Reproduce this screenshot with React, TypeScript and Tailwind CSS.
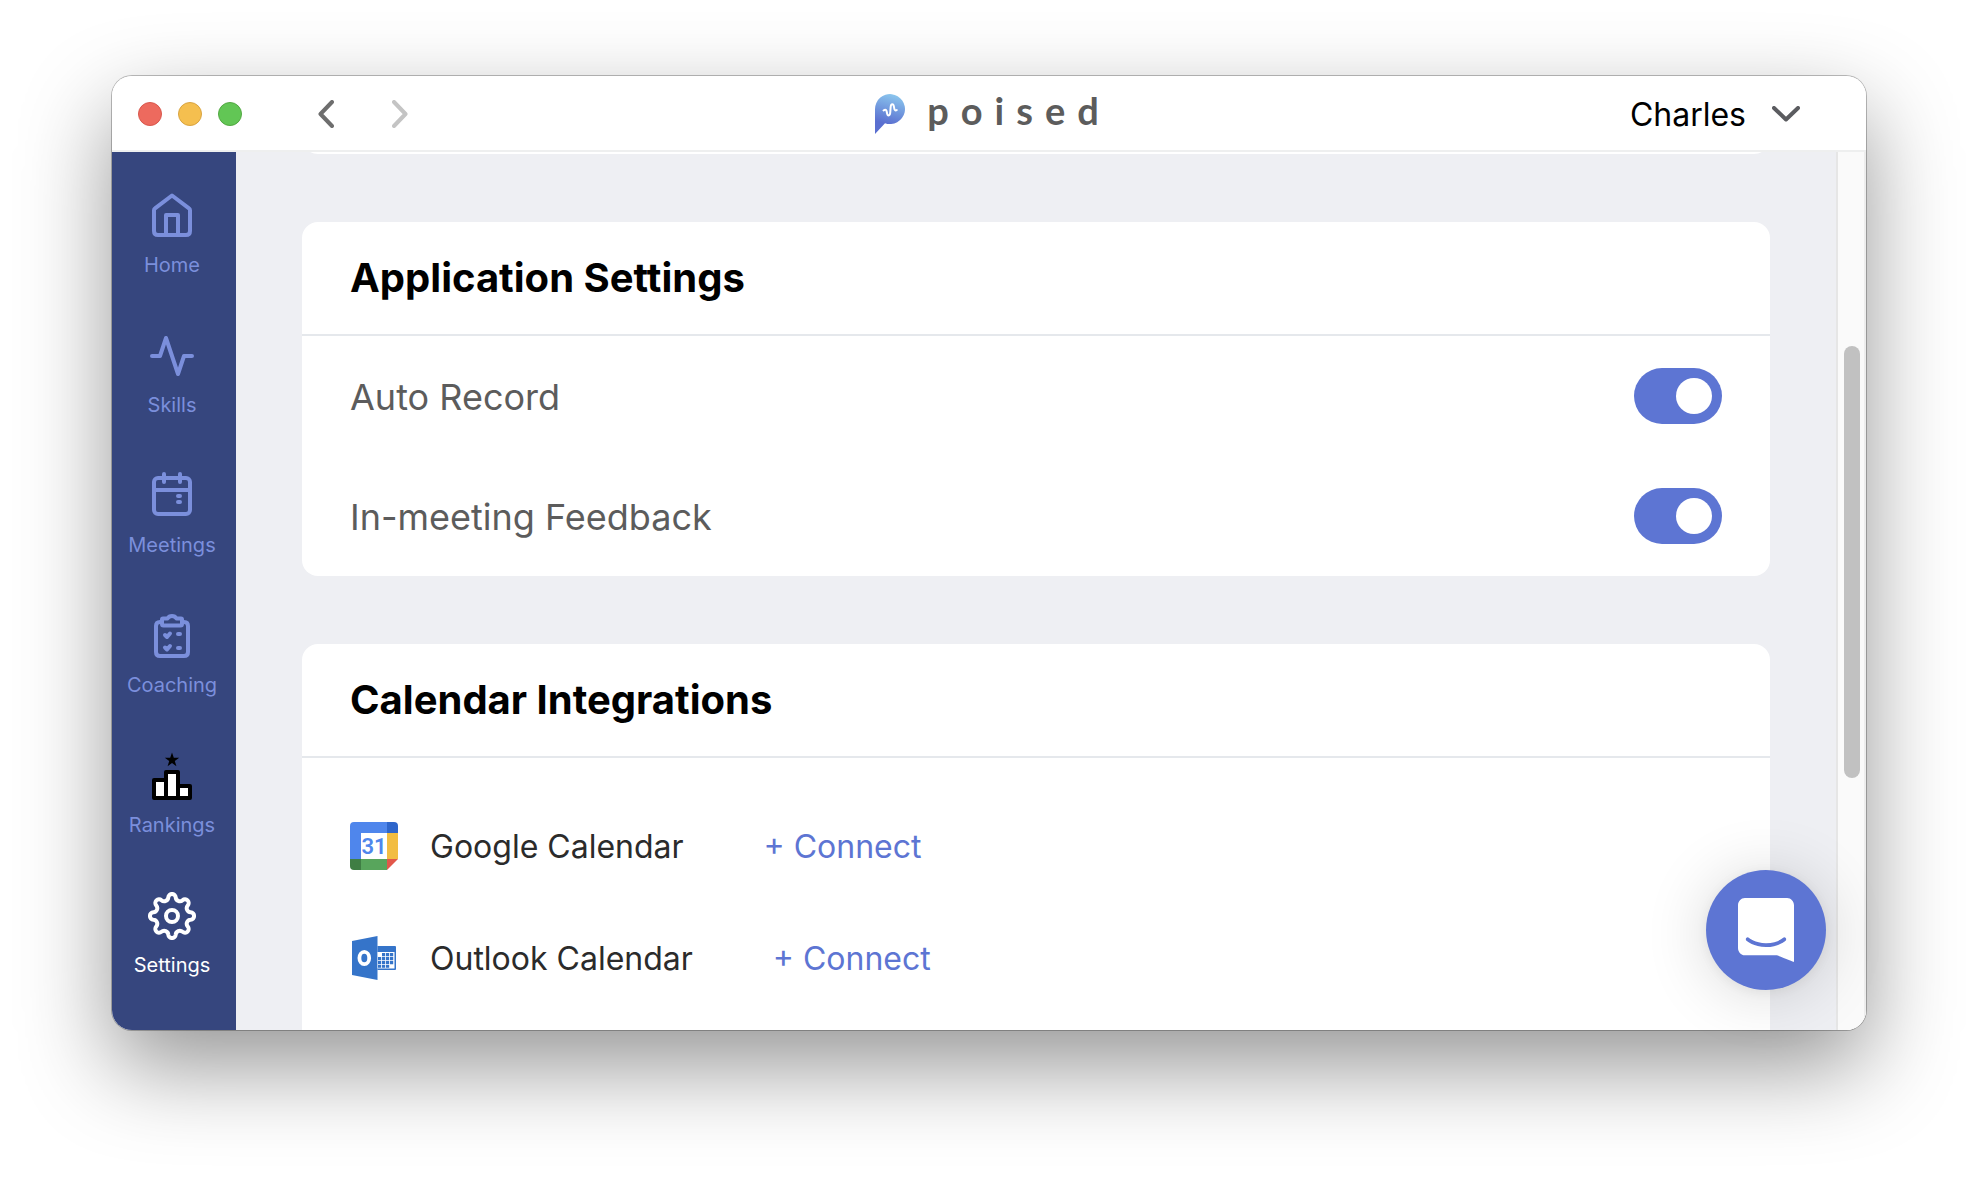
import { useState } from "react";
import type { ReactNode } from "react";

type NavItem = { label: string; icon: ReactNode };

const navItems: NavItem[] = [
  { label: "Home", icon: <HomeIcon /> },
  { label: "Skills", icon: <SkillsIcon /> },
  { label: "Meetings", icon: <MeetingsIcon /> },
  { label: "Coaching", icon: <CoachingIcon /> },
  { label: "Rankings", icon: <RankingsIcon /> },
  { label: "Settings", icon: <SettingsIcon /> },
];

const calendars = [
  { name: "Google Calendar", icon: <GoogleCalendarIcon /> },
  { name: "Outlook Calendar", icon: <OutlookIcon /> },
];

export default function App() {
  const [active, setActive] = useState("Settings");
  const [autoRecord, setAutoRecord] = useState(true);
  const [feedback, setFeedback] = useState(true);

  return (
    <div className="h-screen flex flex-col bg-white px-28 pt-19 pb-37 font-['Inter',sans-serif]">
      <div className="relative flex-1 min-h-0 flex flex-col rounded-[20px] shadow-[0_0_0_1px_rgba(0,0,0,0.25),0_36px_90px_rgba(0,0,0,0.42)]">
        <div className="flex-1 min-h-0 flex flex-col overflow-hidden rounded-[20px] bg-white">
          <TitleBar />
          <div className="flex-1 min-h-0 flex">
            <nav className="w-31 shrink-0 bg-[#36467e] pt-10 pr-1 flex flex-col gap-[54px]">
              {navItems.map((item) => (
                <button
                  key={item.label}
                  onClick={() => setActive(item.label)}
                  className={`flex flex-col items-center gap-3 text-xl leading-[26px] ${
                    item.label === active ? "text-white" : "text-[#7b8fdc]"
                  }`}
                >
                  {item.icon}
                  {item.label}
                </button>
              ))}
            </nav>

            <main className="flex-1 min-w-0 overflow-hidden bg-[#eeeff3] px-[66px] flex flex-col gap-17">
              {/* Tail of the section scrolled out above */}
              <div className="-mt-[30px] h-8 shrink-0 rounded-2xl bg-white" />

              <Card title="Application Settings">
                <ToggleRow label="Auto Record" checked={autoRecord} onChange={setAutoRecord} />
                <ToggleRow label="In-meeting Feedback" checked={feedback} onChange={setFeedback} />
              </Card>

              <Card title="Calendar Integrations">
                <ul className="pt-8 pb-28">
                  {calendars.map((c) => (
                    <li key={c.name} className="h-28 px-12 flex items-center text-[32px] leading-10">
                      {c.icon}
                      <span className="ml-8 pt-0.5 text-[#2b2b2b]">{c.name}</span>
                      <button className="ml-20 pt-0.5 text-[#5d75d3]">+ Connect</button>
                    </li>
                  ))}
                </ul>
              </Card>
            </main>

            {/* Scrollbar */}
            <div className="w-[30px] shrink-0 border-l-2 border-r-2 border-l-[#e6e6e6] border-r-[#ededed] bg-[#fafafa] pl-1.5 pt-[194px]">
              <div className="w-4 h-[432px] rounded-full bg-[#c1c1c1]" />
            </div>
          </div>

          <button
            aria-label="Open chat"
            className="absolute right-10 bottom-10 size-30 rounded-full bg-[#5d75d3] flex items-center justify-center shadow-[0_2px_12px_rgba(0,0,0,0.06),0_4px_64px_rgba(0,0,0,0.16)]"
          >
            <ChatIcon />
          </button>
        </div>
      </div>
    </div>
  );
}

function TitleBar() {
  return (
    <header className="h-19 shrink-0 pt-0.5 border-b-2 border-[#eeefef] grid grid-cols-[1fr_auto_1fr] items-center">
      <div className="flex items-center pl-6.5">
        <div className="flex gap-4">
          <button aria-label="Close" className="size-6 rounded-full border border-[#d9574d] bg-[#ed6a5e]" />
          <button aria-label="Minimize" className="size-6 rounded-full border border-[#d9a441] bg-[#f5bf4f]" />
          <button aria-label="Zoom" className="size-6 rounded-full border border-[#52a842] bg-[#62c655]" />
        </div>
        <button aria-label="Back" className="ml-19 text-[#6e6e6e]">
          <svg className="w-4 h-7" viewBox="0 0 16 28" fill="none" stroke="currentColor" strokeWidth={4} strokeLinecap="round" strokeLinejoin="round">
            <path d="M14 2L2.5 14L14 26" />
          </svg>
        </button>
        <button aria-label="Forward" className="ml-14.5 text-[#c4c4c4]">
          <svg className="w-4 h-7" viewBox="0 0 16 28" fill="none" stroke="currentColor" strokeWidth={4} strokeLinecap="round" strokeLinejoin="round">
            <path d="M2 2L13.5 14L2 26" />
          </svg>
        </button>
      </div>

      <div className="flex items-center">
        <LogoMark />
        <span className="ml-5 -mr-2 pb-2 font-['Lato',sans-serif] font-bold text-[38px] leading-10 tracking-[12px] text-[#5c5c5c]">
          poised
        </span>
      </div>

      <button className="justify-self-end pr-[66px] flex items-center gap-6.5 text-[32px] leading-10 text-black">
        <span className="pt-0.5">Charles</span>
        <svg className="w-7 h-4" viewBox="0 0 28 16" fill="none" stroke="#5b5c60" strokeWidth={4} strokeLinecap="round" strokeLinejoin="round">
          <path d="M2 2L14 13.5L26 2" />
        </svg>
      </button>
    </header>
  );
}

function Card({ title, children }: { title: string; children: ReactNode }) {
  return (
    <section className="shrink-0 rounded-2xl bg-white">
      <h2 className="h-[114px] px-12 flex items-center border-b-2 border-[#e5e8ec] text-[40px] leading-12 font-bold text-black">
        {title}
      </h2>
      {children}
    </section>
  );
}

type ToggleRowProps = { label: string; checked: boolean; onChange: (v: boolean) => void };

function ToggleRow({ label, checked, onChange }: ToggleRowProps) {
  return (
    <label className="h-30 px-12 flex items-center justify-between text-4xl text-[#5c5c5c]">
      <span className="pt-0.5">{label}</span>
      <input
        type="checkbox"
        checked={checked}
        onChange={(e) => onChange(e.target.checked)}
        className="appearance-none w-22 h-14 rounded-full p-2.5 flex justify-start checked:justify-end bg-gray-300 checked:bg-[#5d75d3] before:content-[''] before:size-9 before:rounded-full before:bg-white"
      />
    </label>
  );
}

function LogoMark() {
  return (
    <svg className="w-8 h-10" viewBox="0 0 32 40" fill="none">
      <defs>
        <linearGradient id="logo" x1="20" y1="0" x2="12" y2="30" gradientUnits="userSpaceOnUse">
          <stop stopColor="#8cc8ee" />
          <stop offset="1" stopColor="#5a6fd0" />
        </linearGradient>
      </defs>
      <path d="M0 40V15A15 15 0 1 1 10 29.2Z" fill="url(#logo)" />
      <path d="M8.5 16.5c2-1.5 3-.5 3.3 1.5.6 4.5 3.2 4.5 3.5 0l.3-4.500c.3-4.500 3-4.500 3.500 0 .2 2.500 1.200 3.500 2.700 2.500" stroke="#fff" strokeWidth={2} strokeLinecap="round" />
    </svg>
  );
}

function HomeIcon() {
  return (
    <svg className="size-12" viewBox="0 0 48 48" fill="none" stroke="currentColor" strokeWidth={4} strokeLinejoin="round">
      <path d="M24 3.5L7 16.3Q6 17 6 18.3V39Q6 43 10 43H38Q42 43 42 39V18.3Q42 17 41 16.3Z" />
      <path d="M18 43V23H30V43" />
    </svg>
  );
}

function SkillsIcon() {
  return (
    <svg className="size-12" viewBox="0 0 48 48" fill="none" stroke="currentColor" strokeWidth={4} strokeLinecap="round" strokeLinejoin="round">
      <path d="M4 24H12L18 6L30 42L36 24H44" />
    </svg>
  );
}

function MeetingsIcon() {
  return (
    <svg className="size-12" viewBox="0 0 48 48" fill="none" stroke="currentColor" strokeWidth={4} strokeLinecap="round" strokeLinejoin="round">
      <rect x="6" y="6" width="36" height="36" rx="4" />
      <path d="M6 18H42M16 2V10M32 2V10M30 24h2M30 30h2" />
    </svg>
  );
}

function CoachingIcon() {
  return (
    <svg className="size-12" viewBox="0 0 48 48" fill="none" stroke="currentColor" strokeWidth={4} strokeLinecap="round" strokeLinejoin="round">
      <path d="M13 10H12Q8 10 8 14V40Q8 44 12 44H36Q40 44 40 40V14Q40 10 36 10H35" />
      <path d="M14 7.5Q14 6.5 15 6.5H19.5Q21 4 24 4T28.5 6.5H33Q34 6.5 34 7.5V12Q34 13.5 32.5 13.5H15.5Q14 13.5 14 12Z" />
      <path d="M17 23L19 25L22 21.5M17 35.500L19 37.500L22 34M30 22H32M30 36H32" />
    </svg>
  );
}

function RankingsIcon() {
  return (
    <svg className="size-12" viewBox="0 0 48 48" fill="#fff" stroke="#000" strokeWidth={4} strokeLinejoin="round">
      <path d="M6 28H18V46H6ZM30 34H42V46H30ZM18 20H30V46H18Z" />
      <path d="M24 0.5L25.8 5.7H31.2L26.8 9L28.4 14.3L24 11.1L19.6 14.3L21.2 9L16.8 5.7H22.2Z" fill="#000" stroke="none" />
    </svg>
  );
}

// Eight round teeth: outward and inward arcs meeting on a circle of radius 19
const gearPath = (() => {
  const points = Array.from({ length: 16 }, (_, i) => {
    const a = ((i * 22.5 - 11.25) * Math.PI) / 180;
    return `${(24 + 19 * Math.cos(a)).toFixed(2)} ${(24 + 19 * Math.sin(a)).toFixed(2)}`;
  });
  const arcs = points.map((_, i) => {
    const next = points[(i + 1) % 16];
    return i % 2 === 0 ? `A3.72 3.72 0 0 1 ${next}` : `A4.1 4.1 0 0 0 ${next}`;
  });
  return `M${points[0]}${arcs.join("")}Z`;
})();

function SettingsIcon() {
  return (
    <svg className="size-12" viewBox="0 0 48 48" fill="none" stroke="currentColor" strokeWidth={4} strokeLinejoin="round">
      <SettingsGear />
      <circle cx="24" cy="24" r="6" />
    </svg>
  );
}

function SettingsGear() {
  return <path d={gearPath} />;
}

function GoogleCalendarIcon() {
  return (
    <svg className="size-12" viewBox="0 0 48 48">
      <path d="M37 0H4Q0 0 0 4V37H11V11H37Z" fill="#4f86ec" />
      <path d="M37 0H44Q48 0 48 4V11H37Z" fill="#2f66cb" />
      <path d="M37 11H48V37H37Z" fill="#f2bd42" />
      <path d="M11 37H37V48H11Z" fill="#58a55c" />
      <path d="M0 37H11V48H4Q0 48 0 44Z" fill="#3f7e44" />
      <path d="M37 37H48L37 48Z" fill="#e2574a" />
      <path d="M11 11H37V37H11Z" fill="#fff" />
      <text x="24" y="32" textAnchor="middle" fontSize="22" fontWeight="600" fontFamily="Roboto, sans-serif" fill="#4f86ec">31</text>
    </svg>
  );
}

function OutlookIcon() {
  return (
    <svg className="size-12" viewBox="0 0 48 48">
      <path d="M2 7L27.5 2V46L2 41Z" fill="#3574c9" />
      <ellipse cx="14.3" cy="24" rx="4.9" ry="6.2" fill="none" stroke="#fff" strokeWidth={3.8} />
      <path d="M27.5 12H45Q46 12 46 13V35Q46 36 45 36H27.5Z" fill="#3574c9" />
      <path d="M27.5 18H44.5V34.5H27.5Z" fill="#fff" />
      <path d="M32 19h3.2v3.200h-3.200zM36 19h3.200v3.200h-3.200zM40 19h3.200v3.200h-3.200zM28 23h3.200v3.200h-3.200zM32 23h3.200v3.200h-3.200zM36 23h3.200v3.200h-3.200zM40 23h3.200v3.200h-3.200zM28 27h3.200v3.200h-3.200zM32 27h3.200v3.200h-3.200zM36 27h3.200v3.200h-3.200zM40 27h3.200v3.200h-3.200zM28 31h3.200v2.800h-3.200zM32 31h3.200v2.800h-3.200zM36 31h3.200v2.800h-3.200z" fill="#3574c9" />
    </svg>
  );
}

function ChatIcon() {
  return (
    <svg className="w-14 h-16" viewBox="0 0 28 32" fill="#fff">
      <path d="M28 32s-4.714-1.855-8.527-3.34H3.437C1.54 28.66 0 27.026 0 25.013V3.644C0 1.633 1.54 0 3.437 0h21.125c1.898 0 3.437 1.632 3.437 3.645v18.404H28V32zm-4.139-11.982a.88.88 0 00-1.292-.105c-.03.026-3.015 2.681-8.57 2.681-5.486 0-8.517-2.636-8.571-2.684a.88.88 0 00-1.29.107 1.01 1.01 0 00-.219.708.992.992 0 00.318.664c.142.128 3.537 3.15 9.762 3.15 6.226 0 9.621-3.022 9.763-3.15a.992.992 0 00.317-.664 1.01 1.01 0 00-.218-.707z" />
    </svg>
  );
}
